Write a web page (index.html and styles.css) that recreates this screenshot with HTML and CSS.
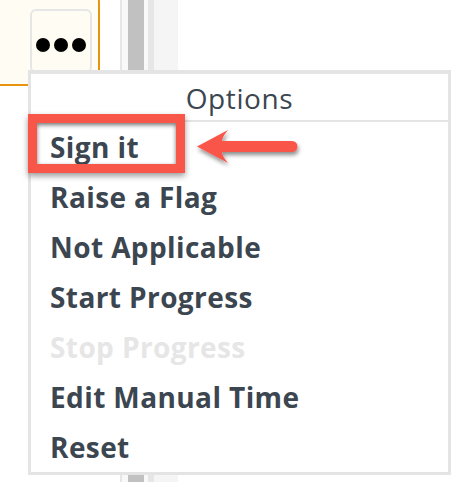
FILE: index.html
```html
<!DOCTYPE html>
<html lang="en">
<head>
    <meta charset="UTF-8">
    <meta name="viewport" content="width=device-width, initial-scale=1.0">
    <title>Options Menu</title>
    <link rel="stylesheet" href="styles.css">
</head>
<body>
    <div class="page">
        <div class="card">
            <button class="more" type="button">
                <span class="dot"></span>
                <span class="dot"></span>
                <span class="dot"></span>
            </button>
        </div>
        <div class="scrollbar"></div>

        <div class="menu">
            <div class="menu-title">Options</div>
            <ul class="menu-list">
                <li class="menu-item">Sign it</li>
                <li class="menu-item">Raise a Flag</li>
                <li class="menu-item">Not Applicable</li>
                <li class="menu-item">Start Progress</li>
                <li class="menu-item disabled">Stop Progress</li>
                <li class="menu-item">Edit Manual Time</li>
                <li class="menu-item">Reset</li>
            </ul>
        </div>

        <!-- annotation -->
        <div class="highlight"></div>
        <svg class="arrow" width="120" height="50" viewBox="190 122 120 50">
            <defs>
                <filter id="shadow" x="-20%" y="-40%" width="140%" height="180%">
                    <feDropShadow dx="1" dy="3" stdDeviation="2" flood-color="#000" flood-opacity="0.45"/>
                </filter>
            </defs>
            <path d="M197,146.5 L228,130 Q222,137 222,141 L292,141 A5.5,5.5 0 0 1 292,152 L222,152 Q222,156 228,163 Z" fill="#f9564a" filter="url(#shadow)"/>
        </svg>
    </div>
</body>
</html>
```

FILE: styles.css
```css
body {
    margin: 0;
    background: #fff;
    font-family: "Open Sans", Lato, sans-serif;
}
.page {
    position: relative;
    width: 452px;
    height: 482px;
    overflow: hidden;
    display: flex;
    align-items: flex-start;
}
.card {
    width: 100px;
    height: 92px;
    margin-top: -6px;
    box-sizing: border-box;
    background: #fffdf3;
    border-right: 2px solid #e8940f;
    border-bottom: 2px solid #e8940f;
    border-radius: 0 8px 8px 0;
    padding: 15px 0 0 30px;
}
.more {
    width: 62px;
    height: 64px;
    box-sizing: border-box;
    background: #fffdf3;
    border: 2px solid #e6e6e6;
    border-radius: 6px;
    display: flex;
    justify-content: center;
    align-items: flex-start;
    gap: 4px;
    padding: 27px 0 0;
}
.dot {
    width: 14px;
    height: 14px;
    border-radius: 50%;
    background: #000;
}
.scrollbar {
    width: 58px;
    height: 100%;
    margin-left: 20px;
    background: linear-gradient(to right,
        #e6e6e6 0, #e6e6e6 2px,
        #f8f8f8 2px, #f8f8f8 8px,
        #c1c1c1 8px, #c1c1c1 24px,
        #f8f8f8 24px, #f8f8f8 28px,
        #e6e6e6 28px, #e6e6e6 34px,
        #f5f5f5 34px, #f5f5f5 58px);
}
.menu {
    position: absolute;
    left: 28px;
    top: 70px;
    width: 423px;
    box-sizing: border-box;
    background: #fff;
    border: 3px solid #e4e4e4;
    border-top-width: 4px;
    color: #3b4650;
}
.menu-title {
    height: 46px;
    line-height: 48px;
    text-align: center;
    font-size: 28px;
    letter-spacing: 0.6px;
    border-bottom: 2px solid #e4e4e4;
}
.menu-list {
    list-style: none;
    margin: 0;
    padding: 0;
}
.menu-item {
    height: 50px;
    line-height: 50px;
    padding-left: 19px;
    font-size: 28px;
    font-weight: 700;
    letter-spacing: 0.4px;
}
.menu-item.disabled {
    color: #e6e6e6;
}
.highlight {
    position: absolute;
    left: 28px;
    top: 114px;
    width: 157px;
    height: 59px;
    box-sizing: border-box;
    border: 9px solid #f9564a;
    box-shadow: 0 3px 6px rgba(0, 0, 0, 0.4), inset 0 2px 4px rgba(0, 0, 0, 0.55);
}
.arrow {
    position: absolute;
    left: 190px;
    top: 122px;
}
```
